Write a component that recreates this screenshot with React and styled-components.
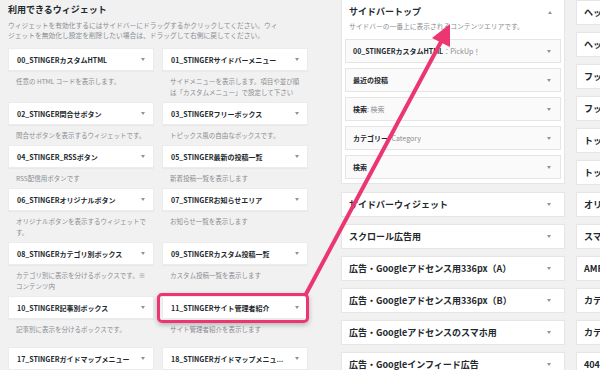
import styled, { createGlobalStyle } from 'styled-components';

const GlobalStyle = createGlobalStyle`
  html, body { margin: 0; padding: 0; }
  body {
    background: #f1f1f1;
    font-family: "Noto Sans CJK JP", "Noto Sans", sans-serif;
    color: #23282d;
    overflow: hidden;
  }
`

const widgets = [
    { no: '00_STINGER', name: 'カスタムHTML', desc: '任意の HTML コードを表示します。' },
    { no: '01_STINGER', name: 'サイドバーメニュー', desc: 'サイドメニューを表示します。項目や並び順は「カスタムメニュー」で設定して下さい' },
    { no: '02_STINGER', name: '問合せボタン', desc: '問合せボタンを表示するウィジェットです。' },
    { no: '03_STINGER', name: 'フリーボックス', desc: 'トピックス風の自由なボックスです。' },
    { no: '04_STINGER_RSS', name: 'ボタン', desc: 'RSS配信用ボタンです' },
    { no: '05_STINGER', name: '最新の投稿一覧', desc: '新着投稿一覧を表示します' },
    { no: '06_STINGER', name: 'オリジナルボタン', desc: 'オリジナルボタンを表示するウィジェットです。' },
    { no: '07_STINGER', name: 'お知らせエリア', desc: 'お知らせ一覧を表示します' },
    { no: '08_STINGER', name: 'カテゴリ別ボックス', desc: 'カテゴリ別に表示を分けるボックスです。※コンテンツ内' },
    { no: '09_STINGER', name: 'カスタム投稿一覧', desc: 'カスタム投稿一覧を表示します' },
    { no: '10_STINGER', name: '記事別ボックス', desc: '記事別に表示を分けるボックスです。', tall: true },
    { no: '11_STINGER', name: 'サイト管理者紹介', desc: 'サイト管理者紹介を表示します', tall: true, mark: true },
    { no: '17_STINGER', name: 'ガイドマップメニュー', desc: 'ガイドマップメニューを表示します' },
    { no: '18_STINGER', name: 'ガイドマップメニュ...', desc: 'ガイドマップメニューを表示します' },
]

const topItems = [
    { label: '00_STINGERカスタムHTML', sub: '：PickUp！' },
    { label: '最近の投稿' },
    { label: '検索', sub: ': 検索' },
    { label: 'カテゴリー', sub: ': Category' },
    { label: '検索' },
]

const areas = [
    'サイドバーウィジェット',
    'スクロール広告用',
    '広告・Googleアドセンス用336px（A）',
    '広告・Googleアドセンス用336px（B）',
    '広告・Googleアドセンスのスマホ用',
    '広告・Googleインフィード広告',
]

const rightAreas = [
    'ヘッダー画像エリア', 'ヘッダー右上エリア', 'フッター（PC）', 'フッター（スマホ）',
    'トップページ上部', 'トップページ下部', 'オリジナル', 'スマホ用',
    'AMP用', 'カテゴリー上部', 'カテゴリー下部', '404ページ',
]

export default function App() {
    return (
        <Page>
            <GlobalStyle />
            <Available>
                <Heading>利用できるウィジェット</Heading>
                <Intro>
                    ウィジェットを有効化するにはサイドバーにドラッグするかクリックしてください。ウィジェットを無効化し設定を削除したい場合は、ドラッグして右側に戻してください。
                </Intro>
                <WidgetGrid>
                    {widgets.map((w) => (
                        <div key={w.no + w.name}>
                            <WidgetCard>
                                <CardTitle>{w.no}{w.name}</CardTitle>
                                <Caret />
                                {w.mark && <Highlight />}
                            </WidgetCard>
                            <WidgetDesc $tall={w.tall}>{w.desc}</WidgetDesc>
                        </div>
                    ))}
                </WidgetGrid>
            </Available>

            <SidebarCol>
                <Panel>
                    <PanelHead>
                        <PanelTitle>サイドバートップ</PanelTitle>
                        <Caret $up />
                    </PanelHead>
                    <PanelDesc>サイドバーの一番上に表示されるコンテンツエリアです。</PanelDesc>
                    <ItemList>
                        {topItems.map((it, i) => (
                            <Item key={i}>
                                <ItemLabel>{it.label}{it.sub && <Sub>{it.sub}</Sub>}</ItemLabel>
                                <Caret />
                            </Item>
                        ))}
                    </ItemList>
                </Panel>
                {areas.map((a) => (
                    <AreaBox key={a}>
                        <span>{a}</span>
                        <Caret />
                    </AreaBox>
                ))}
            </SidebarCol>

            <RightCol>
                {rightAreas.map((a) => (
                    <AreaBox key={a}>
                        <span>{a}</span>
                    </AreaBox>
                ))}
            </RightCol>

            <Overlay width="600" height="370" viewBox="0 0 600 370">
                <line x1="306" y1="294" x2="442" y2="40" stroke="#ec3672" strokeWidth="4" strokeLinecap="round" />
                <polygon points="450,24 432,38 450,47" fill="#ec3672" />
            </Overlay>
        </Page>
    )
}

//Styles
const Page = styled.div`
position: relative;
display: flex;
width: 600px;
height: 370px;
overflow: hidden;
padding-left: 8px;
box-sizing: border-box;
`
const Available = styled.section`
width: 300px;
flex-shrink: 0;
`
const Heading = styled.h2`
margin: 0;
padding-top: 4px;
font-size: 9px;
line-height: 12px;
font-weight: 700;
color: #23282d;
`
const Intro = styled.p`
margin: 4px 0 8px;
width: 272px;
font-size: 6.75px;
line-height: 10px;
color: #8a8d91;
`
const WidgetGrid = styled.div`
display: grid;
grid-template-columns: 146px 146px;
column-gap: 8px;
`
const WidgetCard = styled.div`
position: relative;
display: flex;
align-items: center;
justify-content: space-between;
height: 23px;
padding: 0 8px;
box-sizing: border-box;
background: #fff;
border: 1px solid #ececec;
box-shadow: 0 1px 1px rgba(0,0,0,.03);
`
const CardTitle = styled.span`
font-size: 7px;
font-weight: 700;
white-space: nowrap;
color: #23282d;
`
const WidgetDesc = styled.p`
margin: 0;
padding: 5px 6px ${p => p.$tall ? 12 : 4}px 8px;
font-size: 6.5px;
line-height: 11px;
color: #8a8d91;
`
const Highlight = styled.span`
position: absolute;
left: -6px;
right: -2px;
top: -4px;
bottom: -5px;
border: 3px solid #ec3672;
border-radius: 5px;
box-shadow: 0 2px 5px rgba(0,0,0,.25);
pointer-events: none;
`
const Caret = styled.span`
flex-shrink: 0;
width: 0;
height: 0;
border-left: 2.5px solid transparent;
border-right: 2.5px solid transparent;
${p => p.$up ? 'border-bottom: 3px solid #8f9296;' : 'border-top: 3px solid #8f9296;'}
`
const SidebarCol = styled.div`
display: flex;
flex-direction: column;
gap: 7px;
width: 224px;
margin-left: 33px;
flex-shrink: 0;
`
const Panel = styled.div`
background: #fff;
border: 1px solid #e5e5e5;
border-top: none;
padding: 5px 3px 4px;
margin-bottom: 1px;
`
const PanelHead = styled.div`
display: flex;
align-items: center;
justify-content: space-between;
padding: 0 9px 0 4px;
`
const PanelTitle = styled.h3`
margin: 0;
font-size: 9px;
line-height: 14px;
font-weight: 700;
`
const PanelDesc = styled.p`
margin: 2px 0 8px;
padding-left: 4px;
font-size: 6.75px;
line-height: 10px;
color: #8a8d91;
white-space: nowrap;
`
const ItemList = styled.div`
display: flex;
flex-direction: column;
gap: 5px;
`
const Item = styled.div`
display: flex;
align-items: center;
justify-content: space-between;
height: 24px;
padding: 0 9px 0 7px;
box-sizing: border-box;
background: #fafafa;
border: 1px solid #e5e5e5;
`
const ItemLabel = styled.span`
font-size: 7px;
font-weight: 700;
white-space: nowrap;
`
const Sub = styled.span`
font-weight: 400;
color: #8a8d91;
`
const AreaBox = styled.div`
display: flex;
align-items: center;
justify-content: space-between;
flex-shrink: 0;
height: 25px;
padding: 0 13px 0 7px;
box-sizing: border-box;
background: #fff;
border: 1px solid #e5e5e5;
font-size: 9px;
font-weight: 700;
white-space: nowrap;
overflow: hidden;
`
const RightCol = styled.div`
display: flex;
flex-direction: column;
gap: 7px;
width: 200px;
margin-left: 11px;
flex-shrink: 0;
`
const Overlay = styled.svg`
position: absolute;
top: 0;
left: 0;
pointer-events: none;
`
